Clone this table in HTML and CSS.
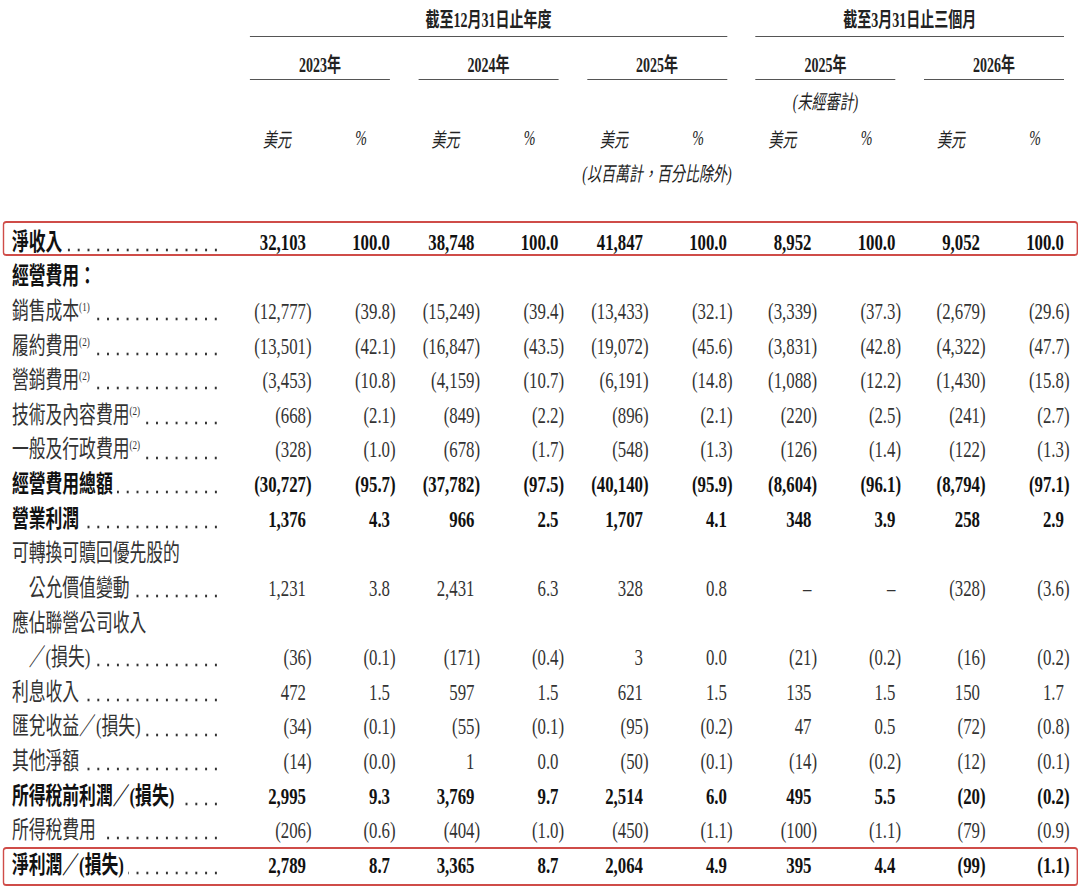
FILE: index.html
```html
<!DOCTYPE html>
<html lang="zh-Hant">
<head>
<meta charset="utf-8">
<title>經營業績</title>
<link rel="stylesheet" href="styles.css">
</head>
<body>
<div class="frame">
<div class="page">
  <div class="hrow h-title">
    <div class="hc rule ttl">截至12月31日止年度</div>
    <div class="hc rule ttl2">截至3月31日止三個月</div>
  </div>
  <div class="hrow h-year">
    <div class="hc rule yr s2">2023年</div>
    <div class="hc rule yr">2024年</div>
    <div class="hc rule yr">2025年</div>
    <div class="hc rule yr">2025年</div>
    <div class="hc rule yr">2026年</div>
  </div>
  <div class="hrow h-aud">
    <div class="hc aud">(未經審計)</div>
  </div>
  <div class="hrow h-unit">
    <div class="unit s2"><span>美元</span><span>%</span></div>
    <div class="unit"><span>美元</span><span>%</span></div>
    <div class="unit"><span>美元</span><span>%</span></div>
    <div class="unit"><span>美元</span><span>%</span></div>
    <div class="unit"><span>美元</span><span>%</span></div>
  </div>
  <div class="hrow h-note">
    <div class="hc note">(以百萬計，百分比除外)</div>
  </div>

  <div class="table">
    <div class="row b hl hl1">
      <div class="lb"><span>淨收入</span><span class="ld"></span></div>
      <div class="g"><span>32,103</span><span>100.0</span></div>
      <div class="g"><span>38,748</span><span>100.0</span></div>
      <div class="g"><span>41,847</span><span>100.0</span></div>
      <div class="g"><span>8,952</span><span>100.0</span></div>
      <div class="g"><span>9,052</span><span>100.0</span></div>
    </div>
    <div class="row b">
      <div class="lb"><span>經營費用：</span></div>
    </div>
    <div class="row neg">
      <div class="lb"><span>銷售成本<sup>(1)</sup></span><span class="ld"></span></div>
      <div class="g"><span>(12,777)</span><span>(39.8)</span></div>
      <div class="g"><span>(15,249)</span><span>(39.4)</span></div>
      <div class="g"><span>(13,433)</span><span>(32.1)</span></div>
      <div class="g"><span>(3,339)</span><span>(37.3)</span></div>
      <div class="g"><span>(2,679)</span><span>(29.6)</span></div>
    </div>
    <div class="row neg">
      <div class="lb"><span>履約費用<sup>(2)</sup></span><span class="ld"></span></div>
      <div class="g"><span>(13,501)</span><span>(42.1)</span></div>
      <div class="g"><span>(16,847)</span><span>(43.5)</span></div>
      <div class="g"><span>(19,072)</span><span>(45.6)</span></div>
      <div class="g"><span>(3,831)</span><span>(42.8)</span></div>
      <div class="g"><span>(4,322)</span><span>(47.7)</span></div>
    </div>
    <div class="row neg">
      <div class="lb"><span>營銷費用<sup>(2)</sup></span><span class="ld"></span></div>
      <div class="g"><span>(3,453)</span><span>(10.8)</span></div>
      <div class="g"><span>(4,159)</span><span>(10.7)</span></div>
      <div class="g"><span>(6,191)</span><span>(14.8)</span></div>
      <div class="g"><span>(1,088)</span><span>(12.2)</span></div>
      <div class="g"><span>(1,430)</span><span>(15.8)</span></div>
    </div>
    <div class="row neg">
      <div class="lb"><span>技術及內容費用<sup>(2)</sup></span><span class="ld"></span></div>
      <div class="g"><span>(668)</span><span>(2.1)</span></div>
      <div class="g"><span>(849)</span><span>(2.2)</span></div>
      <div class="g"><span>(896)</span><span>(2.1)</span></div>
      <div class="g"><span>(220)</span><span>(2.5)</span></div>
      <div class="g"><span>(241)</span><span>(2.7)</span></div>
    </div>
    <div class="row neg">
      <div class="lb"><span>一般及行政費用<sup>(2)</sup></span><span class="ld"></span></div>
      <div class="g"><span>(328)</span><span>(1.0)</span></div>
      <div class="g"><span>(678)</span><span>(1.7)</span></div>
      <div class="g"><span>(548)</span><span>(1.3)</span></div>
      <div class="g"><span>(126)</span><span>(1.4)</span></div>
      <div class="g"><span>(122)</span><span>(1.3)</span></div>
    </div>
    <div class="row b neg">
      <div class="lb"><span>經營費用總額</span><span class="ld"></span></div>
      <div class="g"><span>(30,727)</span><span>(95.7)</span></div>
      <div class="g"><span>(37,782)</span><span>(97.5)</span></div>
      <div class="g"><span>(40,140)</span><span>(95.9)</span></div>
      <div class="g"><span>(8,604)</span><span>(96.1)</span></div>
      <div class="g"><span>(8,794)</span><span>(97.1)</span></div>
    </div>
    <div class="row b">
      <div class="lb"><span>營業利潤</span><span class="ld"></span></div>
      <div class="g"><span>1,376</span><span>4.3</span></div>
      <div class="g"><span>966</span><span>2.5</span></div>
      <div class="g"><span>1,707</span><span>4.1</span></div>
      <div class="g"><span>348</span><span>3.9</span></div>
      <div class="g"><span>258</span><span>2.9</span></div>
    </div>
    <div class="row">
      <div class="lb"><span>可轉換可贖回優先股的</span></div>
    </div>
    <div class="row">
      <div class="lb in"><span>公允價值變動</span><span class="ld"></span></div>
      <div class="g"><span>1,231</span><span>3.8</span></div>
      <div class="g"><span>2,431</span><span>6.3</span></div>
      <div class="g"><span>328</span><span>0.8</span></div>
      <div class="g"><span>–</span><span>–</span></div>
      <div class="g"><span class="p">(328)</span><span class="p">(3.6)</span></div>
    </div>
    <div class="row">
      <div class="lb"><span>應佔聯營公司收入</span></div>
    </div>
    <div class="row">
      <div class="lb in"><span>／(損失)</span><span class="ld"></span></div>
      <div class="g"><span class="p">(36)</span><span class="p">(0.1)</span></div>
      <div class="g"><span class="p">(171)</span><span class="p">(0.4)</span></div>
      <div class="g"><span>3</span><span>0.0</span></div>
      <div class="g"><span class="p">(21)</span><span class="p">(0.2)</span></div>
      <div class="g"><span class="p">(16)</span><span class="p">(0.2)</span></div>
    </div>
    <div class="row">
      <div class="lb"><span>利息收入</span><span class="ld"></span></div>
      <div class="g"><span>472</span><span>1.5</span></div>
      <div class="g"><span>597</span><span>1.5</span></div>
      <div class="g"><span>621</span><span>1.5</span></div>
      <div class="g"><span>135</span><span>1.5</span></div>
      <div class="g"><span>150</span><span>1.7</span></div>
    </div>
    <div class="row">
      <div class="lb"><span>匯兌收益／(損失)</span><span class="ld"></span></div>
      <div class="g"><span class="p">(34)</span><span class="p">(0.1)</span></div>
      <div class="g"><span class="p">(55)</span><span class="p">(0.1)</span></div>
      <div class="g"><span class="p">(95)</span><span class="p">(0.2)</span></div>
      <div class="g"><span>47</span><span>0.5</span></div>
      <div class="g"><span class="p">(72)</span><span class="p">(0.8)</span></div>
    </div>
    <div class="row">
      <div class="lb"><span>其他淨額</span><span class="ld"></span></div>
      <div class="g"><span class="p">(14)</span><span class="p">(0.0)</span></div>
      <div class="g"><span>1</span><span>0.0</span></div>
      <div class="g"><span class="p">(50)</span><span class="p">(0.1)</span></div>
      <div class="g"><span class="p">(14)</span><span class="p">(0.2)</span></div>
      <div class="g"><span class="p">(12)</span><span class="p">(0.1)</span></div>
    </div>
    <div class="row b">
      <div class="lb"><span>所得稅前利潤／(損失)</span><span class="ld"></span></div>
      <div class="g"><span>2,995</span><span>9.3</span></div>
      <div class="g"><span>3,769</span><span>9.7</span></div>
      <div class="g"><span>2,514</span><span>6.0</span></div>
      <div class="g"><span>495</span><span>5.5</span></div>
      <div class="g"><span class="p">(20)</span><span class="p">(0.2)</span></div>
    </div>
    <div class="row neg">
      <div class="lb"><span>所得稅費用</span><span class="ld"></span></div>
      <div class="g"><span>(206)</span><span>(0.6)</span></div>
      <div class="g"><span>(404)</span><span>(1.0)</span></div>
      <div class="g"><span>(450)</span><span>(1.1)</span></div>
      <div class="g"><span>(100)</span><span>(1.1)</span></div>
      <div class="g"><span>(79)</span><span>(0.9)</span></div>
    </div>
    <div class="row b hl hl2">
      <div class="lb"><span>淨利潤／(損失)</span><span class="ld"></span></div>
      <div class="g"><span>2,789</span><span>8.7</span></div>
      <div class="g"><span>3,365</span><span>8.7</span></div>
      <div class="g"><span>2,064</span><span>4.9</span></div>
      <div class="g"><span>395</span><span>4.4</span></div>
      <div class="g"><span class="p">(99)</span><span class="p">(1.1)</span></div>
    </div>
  </div>
</div>
</div>
</body>
</html>
```

FILE: styles.css
```css
html, body {
  margin: 0;
  padding: 0;
  background: #fff;
  overflow: hidden;
}

.frame {
  width: 1080px;
  height: 889px;
  overflow: hidden;
}

.page {
  width: 1542.7px;
  transform: scaleX(0.7);
  transform-origin: 0 0;
  font-family: "Liberation Serif", "Noto Sans CJK TC", serif;
  color: #333;
}

/* ---------- header ---------- */
.hrow {
  display: grid;
  grid-template-columns: 316.43px repeat(5, 200px);
  column-gap: 40.71px;
  font-size: 20px;
  color: #222;
}
.h-title { height: 37px; }
.h-year { height: 43px; }
.h-aud { height: 40px; }
.h-unit { height: 36px; }
.h-note { height: 32px; margin-bottom: 36.7px; }

.hc {
  display: flex;
  align-items: center;
  justify-content: center;
  white-space: nowrap;
  box-sizing: border-box;
}
.rule { border-bottom: 1.5px solid #555; }
.ttl { grid-column: 2 / 5; font-weight: 700; }
.ttl2 { grid-column: 5 / 7; font-weight: 700; }
.yr { font-weight: 700; padding-top: 10px; }
.s2 { grid-column-start: 2; }
.aud { grid-column: 5 / 6; font-style: italic; }
.note { grid-column: 4 / 5; font-style: italic; }

.unit {
  display: grid;
  grid-template-columns: 80px 120px;
  align-items: center;
  font-style: italic;
}
.unit span:first-child { text-align: center; padding-right: 3px; }
.unit span:last-child { text-align: right; padding-right: 33px; }

/* ---------- data rows ---------- */
.row {
  display: grid;
  grid-template-columns: 316.43px repeat(5, 200px);
  column-gap: 40.71px;
  height: 34.64px;
  line-height: 34.64px;
  font-size: 24px;
}
.row.b { font-weight: 700; color: #111; }

.lb {
  display: flex;
  padding: 0 1px 0 17px;
  white-space: nowrap;
}
.lb.in { padding-left: 41px; }

.ld {
  flex: 1;
  margin-left: 6px;
  background-image: radial-gradient(circle, #333 0 1.3px, transparent 1.8px);
  background-size: 14px 4px;
  background-repeat: repeat-x;
  background-position: right 0 bottom 7.5px;
}

sup {
  font-size: 13px;
  line-height: 0;
  vertical-align: 8px;
  font-weight: 400;
}

.g {
  display: grid;
  grid-template-columns: 80px 120px;
}
.g span {
  text-align: right;
  white-space: nowrap;
}
.neg .g span,
.g .p { margin-right: -8px; }

/* red highlight frames (annotation overlay) */
.hl { position: relative; }
.hl::after {
  content: "";
  position: absolute;
  left: 4.3px;
  right: 2.8px;
  border-style: solid;
  border-color: #cf4c48;
  border-width: 2px 2.86px;
  border-radius: 5px / 3.5px;
  pointer-events: none;
}
.hl1::after { top: -3.7px; bottom: 3.3px; }
.hl2::after { top: -0.7px; bottom: -3.6px; }
```
